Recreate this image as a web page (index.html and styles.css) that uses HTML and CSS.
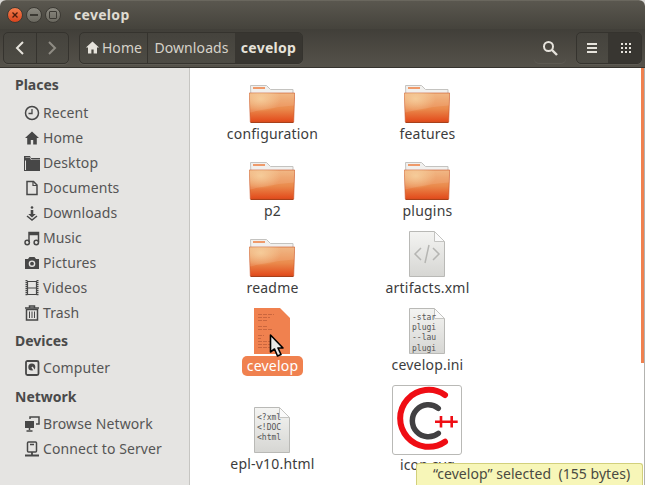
FILE: index.html
```html
<!DOCTYPE html>
<html lang="en">
<head>
<meta charset="utf-8">
<title>cevelop</title>
<link rel="stylesheet" href="styles.css">
</head>
<body>
<svg class="defs" width="0" height="0" aria-hidden="true">
  <defs>
    <linearGradient id="fg" x1="0" y1="0" x2="0" y2="1">
      <stop offset="0" stop-color="#f0b078"/><stop offset="0.55" stop-color="#ea8a4c"/><stop offset="1" stop-color="#e2491a"/>
    </linearGradient>
    <linearGradient id="pg" x1="0" y1="0" x2="0" y2="1">
      <stop offset="0" stop-color="#f4f4f2"/><stop offset="1" stop-color="#d6d6d3"/>
    </linearGradient>
    <radialGradient id="fh" cx="0.25" cy="0.2" r="0.45">
      <stop offset="0" stop-color="#f6cf98" stop-opacity=".8"/><stop offset="1" stop-color="#f6cf98" stop-opacity="0"/>
    </radialGradient>
    <symbol id="folder" viewBox="0 0 46 38">
      <path d="M1.500.500h16l4 4h22.500v10h-42z" fill="#f1f0ee" stroke="#c4c3c0"/>
      <rect x="4" y="2" width="12" height="2" fill="#ef9a6a"/>
      <path d="M.3 8h45.400l-1 29H1.300z" fill="url(#fg)" stroke="#c9562a" stroke-width=".6"/>
      <path d="M.3 8h45.400l-1 29H1.300z" fill="url(#fh)"/>
      <path d="M1 8.500h44v12c-14 1-31 4-44 7z" fill="#fff" opacity=".1"/>
      <path d="M1.500 37.500h43" stroke="#a8401a"/>
    </symbol>
    <symbol id="page" viewBox="0 0 36 46">
      <path d="M.5.500h25l10 10v35H.5z" fill="url(#pg)" stroke="#b9b9b6"/>
      <path d="M25.500.500v10h10z" fill="#fafafa" stroke="#c4c4c1"/>
    </symbol>
    <symbol id="home" viewBox="0 0 16 16"><path d="M8 1.500 1 8h2.200v6.500h3.600V10h2.400v4.500h3.600V8H15z" fill="currentColor"/></symbol>
  </defs>
</svg>

<div class="window">
  <header class="titlebar">
    <div class="winctl">
      <span class="wbtn close">
        <svg viewBox="0 0 8 8" width="8" height="8"><path d="M1.500 1.500l5 5m0-5l-5 5" stroke="#4b1c0c" stroke-width="1.300"/></svg>
      </span>
      <span class="wbtn"><i class="wmin"></i></span>
      <span class="wbtn"><i class="wmax"></i></span>
    </div>
    <span class="wintitle">cevelop</span>
  </header>

  <div class="toolbar">
    <div class="btngroup nav">
      <button class="tbtn back" type="button">
        <svg viewBox="0 0 12 16" width="12" height="16"><path d="M9 2 3 8l6 6" fill="none" stroke="#e6e3dc" stroke-width="2"/></svg>
      </button>
      <button class="tbtn fwd" type="button">
        <svg viewBox="0 0 12 16" width="12" height="16"><path d="M3 2l6 6-6 6" fill="none" stroke="#8f8c84" stroke-width="2"/></svg>
      </button>
    </div>
    <div class="btngroup path">
      <button class="crumb c-home" type="button"><svg class="crumbicon" width="15" height="15"><use href="#home"/></svg>Home</button>
      <button class="crumb c-dl" type="button">Downloads</button>
      <button class="crumb c-cur" type="button">cevelop</button>
    </div>
    <div class="spacer"></div>
    <button class="btngroup tbtn search" type="button">
      <svg viewBox="0 0 16 16" width="16" height="16"><circle cx="6.500" cy="6.500" r="4.500" fill="none" stroke="#e6e3dc" stroke-width="2"/><path d="m10 10 5 5" stroke="#e6e3dc" stroke-width="2.400"/></svg>
    </button>
    <div class="btngroup views">
      <button class="tbtn list" type="button">
        <svg viewBox="0 0 12 12" width="12" height="12"><path d="M1 2h10M1 6h10M1 10h10" stroke="#e6e3dc" stroke-width="2"/></svg>
      </button>
      <button class="tbtn grid" type="button">
        <svg viewBox="0 0 12 12" width="12" height="12" fill="#e6e3dc"><rect x="1" y="1" width="2" height="2"/><rect x="5" y="1" width="2" height="2"/><rect x="9" y="1" width="2" height="2"/><rect x="1" y="5" width="2" height="2"/><rect x="5" y="5" width="2" height="2"/><rect x="9" y="5" width="2" height="2"/><rect x="1" y="9" width="2" height="2"/><rect x="5" y="9" width="2" height="2"/><rect x="9" y="9" width="2" height="2"/></svg>
      </button>
    </div>
  </div>

  <div class="main">
    <nav class="sidebar">
      <h2 class="sechead">Places</h2>
      <ul class="navlist">
        <li><svg class="nico" viewBox="0 0 16 16"><circle cx="8" cy="8" r="6.500" fill="none" stroke="currentColor" stroke-width="1.500"/><path d="M8 4v4.500H4.500" fill="none" stroke="currentColor" stroke-width="1.300"/></svg>Recent</li>
        <li><svg class="nico"><use href="#home"/></svg>Home</li>
        <li><svg class="nico" viewBox="0 0 16 16"><path d="M0 1h6l1 2h9v13H0z" fill="currentColor"/><path d="M1.500 3h4.500l1 2h9v-.5H7.500l-1-2H1.500z" fill="#e5e4e2"/><path d="M1 5.500h1V15H1z" fill="#e5e4e2"/></svg>Desktop</li>
        <li><svg class="nico" viewBox="0 0 16 16"><path d="M3 1.500h6.500l3.500 3.500v9.500H3z" fill="none" stroke="currentColor" stroke-width="1.500"/><path d="M9 1.500V5.500h4" fill="none" stroke="currentColor" stroke-width="1.200"/></svg>Documents</li>
        <li><svg class="nico" viewBox="0 0 16 16"><circle cx="8" cy="2.500" r="1.300" fill="currentColor"/><path d="M6.700 5h2.600v4h2.500L8 12.500 4.200 9h2.500z" fill="currentColor"/><path d="M3 11l5 4 5-4" fill="none" stroke="currentColor" stroke-width="1.500"/></svg>Downloads</li>
        <li><svg class="nico" viewBox="0 0 16 16"><path d="M5 12V2.500h9.500V12" fill="none" stroke="currentColor" stroke-width="1.500"/><path d="M5 4h9.500" stroke="currentColor" stroke-width="2.500"/><circle cx="3.200" cy="12.500" r="2.200" fill="none" stroke="currentColor" stroke-width="1.500"/><circle cx="12.300" cy="12.500" r="2.200" fill="none" stroke="currentColor" stroke-width="1.500"/></svg>Music</li>
        <li><svg class="nico" viewBox="0 0 16 16"><path d="M1 4h3l1.500-2h5L12 4h3v10H1z" fill="currentColor"/><circle cx="8" cy="8.700" r="3.300" fill="#e5e4e2"/><circle cx="8" cy="8.700" r="1.900" fill="currentColor"/></svg>Pictures</li>
        <li><svg class="nico" viewBox="0 0 16 16"><path d="M2.500 0v16M13.500 0v16" stroke="currentColor" stroke-width="2" stroke-dasharray="1.200 .8"/><path d="M3.500 1.500h9v13h-9zM3.500 8h9" fill="none" stroke="currentColor" stroke-width="1.200"/></svg>Videos</li>
        <li><svg class="nico" viewBox="0 0 16 16"><path d="M1 3h14M5.500 3V1h5v2" fill="none" stroke="currentColor" stroke-width="1.500"/><path d="M2.500 4.500h11V15h-11z" fill="none" stroke="currentColor" stroke-width="1.500"/><path d="M5.500 6.500v6.500M8 6.500v6.500M10.500 6.500v6.500" stroke="currentColor"/></svg>Trash</li>
      </ul>
      <h2 class="sechead devices">Devices</h2>
      <ul class="navlist short">
        <li><svg class="nico" viewBox="0 0 16 16"><rect x="2" y="1" width="12.500" height="14" rx="1.500" fill="none" stroke="currentColor" stroke-width="1.800"/><circle cx="7.800" cy="7" r="3.500" fill="currentColor"/><path d="M8 7l3 4.500" stroke="#e5e4e2" stroke-width="1.500"/></svg>Computer</li>
      </ul>
      <h2 class="sechead network">Network</h2>
      <ul class="navlist short">
        <li><svg class="nico" viewBox="0 0 16 16"><rect x="1" y="5" width="9" height="7" fill="currentColor"/><path d="M5.500 12v2M2.500 15h6" stroke="currentColor" stroke-width="1.500"/><path d="M6 3V1h9v7h-3" fill="none" stroke="currentColor" stroke-width="1.500"/></svg>Browse Network</li>
        <li><svg class="nico" viewBox="0 0 16 16"><rect x="3.500" y="1" width="9" height="10" rx="1" fill="none" stroke="currentColor" stroke-width="1.500"/><path d="M6 3.500h4" stroke="currentColor" stroke-width="1.500"/><path d="M8 11v2.500M1 14.500h14" stroke="currentColor" stroke-width="1.800"/></svg>Connect to Server</li>
      </ul>
    </nav>

    <section class="files">
      <div class="filegrid">
        <figure class="item"><svg class="ic-folder"><use href="#folder"/></svg><figcaption>configuration</figcaption></figure>
        <figure class="item"><svg class="ic-folder"><use href="#folder"/></svg><figcaption>features</figcaption></figure>
        <figure class="item"><svg class="ic-folder"><use href="#folder"/></svg><figcaption>p2</figcaption></figure>
        <figure class="item"><svg class="ic-folder"><use href="#folder"/></svg><figcaption>plugins</figcaption></figure>
        <figure class="item"><svg class="ic-folder"><use href="#folder"/></svg><figcaption>readme</figcaption></figure>
        <figure class="item">
          <svg class="ic-page" viewBox="0 0 36 46"><use href="#page" width="36" height="46"/><path d="M12 17l-6 6 6 6M24 17l6 6-6 6M20 14l-4 18" fill="none" stroke="#b5b5b2" stroke-width="1.500"/></svg>
          <figcaption>artifacts.xml</figcaption>
        </figure>
        <figure class="item selected">
          <svg class="ic-page" viewBox="0 0 36 46">
            <path d="M0 0h26l10 10v36H0z" fill="#f0814f"/>
            <path d="M4 6.500h16M4 9.500h12M4 12.500h10M4 18.500h10M4 21.500h14M4 27.500h6M4 30.500h3M4 33.500h20M4 36.500h20M4 39.500h12" stroke="#c0603a" stroke-width=".8" stroke-dasharray="4 1"/>
          </svg>
          <figcaption>cevelop</figcaption>
        </figure>
        <figure class="item">
          <svg class="ic-page" viewBox="0 0 36 46"><use href="#page" width="36" height="46"/><text class="mono" x="3" y="12">-star</text><text class="mono" x="3" y="22">plugi</text><text class="mono" x="3" y="32">--lau</text><text class="mono" x="3" y="43">plugi</text></svg>
          <figcaption>cevelop.ini</figcaption>
        </figure>
        <figure class="item low">
          <svg class="ic-page" viewBox="0 0 36 46"><use href="#page" width="36" height="46"/><text class="mono" x="3" y="13">&lt;?xml</text><text class="mono" x="3" y="23">&lt;!DOC</text><text class="mono" x="3" y="33">&lt;html</text></svg>
          <figcaption>epl-v10.html</figcaption>
        </figure>
        <figure class="item thumbitem">
          <div class="thumb">
            <svg viewBox="0 0 68 68" width="68" height="68">
              <path d="M52 9A28.500 28.500 0 1 0 52 55.700" fill="none" stroke="#ef0d14" stroke-width="6" stroke-linecap="round"/>
              <path d="M45.300 22.300A16 16 0 1 0 45.300 47.300" fill="none" stroke="#414042" stroke-width="5.500" stroke-linecap="round"/>
              <path d="M42 35.700h12M48 30v11.500M52.700 35.700h12M58.700 30v11.500" stroke="#ef0d14" stroke-width="2.600"/>
            </svg>
          </div>
          <figcaption>icon.svg</figcaption>
        </figure>
      </div>
      <svg class="cursor" viewBox="0 0 16 24" width="16" height="24"><path d="M1.500 1v17l4-3 3 7 3.500-1.500-3-6.500h5z" fill="#e8e8e6" stroke="#000" stroke-width="1.600" stroke-linejoin="round"/></svg>
      <div class="status">“cevelop” selected  (155 bytes)</div>
    </section>
    <div class="scrollbar"><div class="thumbbar"></div></div>
  </div>
</div>
</body>
</html>
```
FILE: styles.css
```css
* { box-sizing: border-box; }
html, body { margin: 0; height: 100%; }
body {
  background: #d9d8d5;
  font-family: "Noto Sans", "Open Sans", sans-serif;
  font-size: 14px;
  overflow: hidden;
}
.defs { position: absolute; }
.window {
  width: 645px;
  height: 485px;
  display: flex;
  flex-direction: column;
  border-radius: 6px 6px 0 0;
  overflow: hidden;
  background: #fff;
}
.titlebar {
  height: 29px;
  flex: none;
  display: flex;
  align-items: center;
  padding: 0 0 1px 7px;
  background: linear-gradient(#5a574f, #45433c);
  border-top: 1px solid #6a675e;
}
.winctl { display: flex; gap: 3px; }
.wbtn {
  width: 16px;
  height: 16px;
  border-radius: 50%;
  background: linear-gradient(#8b8980, #6a685f);
  border: 1px solid #3c3a34;
  display: flex;
  align-items: center;
  justify-content: center;
}
.close { background: linear-gradient(#f47e4d, #d9441d); }
.wmin { display: block; width: 8px; height: 2px; background: #3c3a34; }
.wmax { display: block; width: 8px; height: 8px; border: 1px solid #3c3a34; border-radius: 1px; }
.wintitle {
  margin-left: 13px;
  color: #dfdbd2;
  font-weight: 700;
  font-size: 14px;
  letter-spacing: .3px;
}
.toolbar {
  height: 39px;
  flex: none;
  display: flex;
  align-items: center;
  padding: 3px 3px 4px 3px;
  background: linear-gradient(#413f39, #55524a);
  border-bottom: 1px solid #35332e;
}
.btngroup {
  display: flex;
  height: 32px;
  border: 1px solid #35332e;
  border-radius: 5px;
  background: linear-gradient(#45433d, #4d4b44);
  overflow: hidden;
  padding: 0;
  box-shadow: 0 1px 0 rgba(255,255,255,.06);
}
.tbtn {
  display: flex;
  align-items: center;
  justify-content: center;
  border: 0;
  background: none;
  padding: 0;
  height: 100%;
}
.nav { width: 66px; margin-right: 10px; }
.nav .tbtn { flex: 1; }
.back { border-right: 1px solid #35332e !important; }
.path { width: 224px; }
.crumb {
  display: flex;
  align-items: center;
  justify-content: center;
  height: 100%;
  border: 0;
  background: none;
  color: #d6d2c9;
  font: 14px "Noto Sans", sans-serif;
  letter-spacing: .1px;
  padding: 0;
}
.c-home { width: 68px; border-right: 1px solid #35332e; }
.c-dl { width: 87px; }
.c-cur { width: 67px; background: #383631; color: #e6e2d9; font-weight: 700; letter-spacing: .3px; }
.crumbicon { color: #e6e3dc; margin-right: 2px; }
.spacer { flex: 1; }
.search { width: 32px; margin-right: 10px; }
.views { width: 66px; }
.views .tbtn { flex: 1; }
.grid { background: #383631; padding-left: 3px; }
.main { flex: 1; display: flex; min-height: 0; }
.sidebar {
  width: 190px;
  flex: none;
  background: #e5e4e2;
  border-right: 1px solid #c6c5c2;
  color: #4c4c4c;
  padding-top: 7px;
}
.sechead {
  margin: 0;
  padding-left: 15px;
  height: 20px;
  line-height: 20px;
  font-size: 14px;
  font-weight: 700;
  letter-spacing: 0;
  color: #4a4a4a;
}
.devices { margin-top: 6px; }
.network { margin-top: 7px; }
.navlist {
  list-style: none;
  margin: 5px 0 0;
  padding: 0;
}
.navlist.short { margin-top: 4px; }
.navlist li {
  height: 25px;
  display: flex;
  align-items: center;
  padding-left: 24px;
  font-size: 14px;
  letter-spacing: .1px;
  color: #555;
}
.nico { width: 16px; height: 16px; margin-right: 3px; flex: none; color: #474747; }
.files {
  flex: 1;
  position: relative;
  z-index: 1;
  background: #fff;
}
.filegrid {
  display: grid;
  grid-template-columns: 155px 155px;
  grid-auto-rows: 77px;
  padding: 12px 0 0 5px;
  color: #3c3c3c;
}
.item {
  margin: 0;
  display: flex;
  flex-direction: column;
  align-items: center;
}
.item figcaption {
  font-size: 14px;
  line-height: 20px;
  padding: 0 6px;
  letter-spacing: .2px;
  white-space: nowrap;
}
.ic-folder { width: 46px; height: 38px; margin: 5px 1px 1px 0; flex: none; }
.ic-page { width: 36px; height: 46px; margin: -3px 1px 1px 0; flex: none; }
.item.selected figcaption {
  background: #f0814f;
  color: #fff;
  border-radius: 5px;
  margin-top: 1px;
  padding: 0 5px;
}
.low { padding-top: 22px; height: 99px; }
.thumbitem { height: 99px; }
.thumb {
  width: 70px;
  height: 70px;
  margin: -3px 1px 0 0;
  border: 1px solid #b9b9b6;
  border-radius: 3px;
  background: #fff;
  flex: none;
  display: flex;
  align-items: center;
  justify-content: center;
}
.mono {
  font-family: "DejaVu Sans Mono", "Liberation Mono", monospace;
  font-size: 8px;
  fill: #555;
}
.cursor { position: absolute; left: 79px; top: 266px; }
.status {
  position: absolute;
  right: -2px;
  bottom: 0;
  width: 227px;
  height: 22px;
  line-height: 20px;
  padding-left: 16px;
  white-space: pre;
  background: #f7f6b8;
  border: 1px solid #d2d07c;
  border-bottom: 0;
  border-radius: 3px 3px 0 0;
  font-size: 14px;
  letter-spacing: .05px;
  color: #4a4a42;
}
.scrollbar {
  width: 4px;
  flex: none;
  background: #fff;
  border-right: 1px solid #b3b3b0;
}
.thumbbar { height: 295px; background: #f0814f; }
```
